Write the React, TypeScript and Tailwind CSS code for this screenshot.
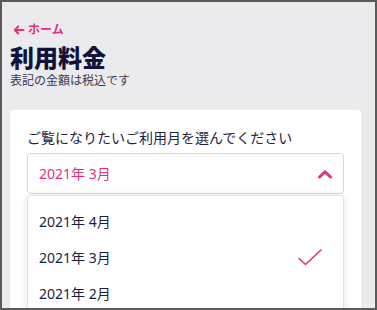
import React from 'react';

const months = ['2021年 4月', '2021年 3月', '2021年 2月'];

export default function App() {
  const selected = '2021年 3月';

  return (
    <div
      className="w-[377px] h-[310px] overflow-hidden border-2 border-[#5a5a5a] bg-[#ebebee]"
      style={{ fontFamily: '"Noto Sans", "Noto Sans CJK JP", sans-serif' }}
    >
      <div className="pl-2 pt-[20px]">
        {/* Header */}
        <a className="flex items-center gap-[3px] pl-[3px] h-4 text-[12px] font-bold leading-4 text-[#e4317f]">
          <svg width="12" height="12" viewBox="0 0 12 12" fill="none" stroke="currentColor" strokeWidth={2} strokeLinecap="round" strokeLinejoin="round">
            <path d="M10.5 6H2M5.2 2.5L1.8 6l3.4 3.5" />
          </svg>
          <span>ホーム</span>
        </a>
        <h1 className="mt-[6px] text-[24px] font-extrabold leading-7 text-[#10133a]">利用料金</h1>
        <p className="mt-px text-[12px] leading-4 text-[#3a3b4e]">表記の金額は税込です</p>

        {/* Card */}
        <div className="relative mt-[21px] w-[351px] h-[220px] rounded-[4px] bg-white px-[17px] pt-[18px]">
          <label className="block text-[14px] leading-5 text-[#22243d]">ご覧になりたいご利用月を選んでください</label>
          <div className="relative mt-[5px]">
            <button className="flex h-[41px] w-full items-center justify-between rounded-[4px] border border-[#d6d5e0] bg-white pl-[11px] pr-[10px] text-[14px] text-[#e4317f]">
              <span>{selected}</span>
              <svg width="16" height="10" viewBox="0 0 16 10" fill="none" stroke="currentColor" strokeWidth={3} strokeLinecap="round" strokeLinejoin="round">
                <path d="M2.5 8L8 2.8 13.5 8" />
              </svg>
            </button>

            {/* Dropdown menu */}
            <ul className="absolute left-0 top-[42px] w-full rounded-t-[4px] border border-[#e2e2ea] bg-white pt-[7px] pb-4 shadow-[0_2px_8px_rgba(0,0,0,0.12)]">
              {months.map((m) => (
                <li key={m} className="flex h-9 items-center justify-between pl-[11px] pr-[21px] text-[14px] text-[#1c1d38]">
                  <span>{m}</span>
                  {m === selected && (
                    <svg width="24" height="17" viewBox="0 0 24 17" fill="none" stroke="#e4317f" strokeWidth={1.6} strokeLinecap="round" strokeLinejoin="round">
                      <path d="M1 9.5L7.5 15.5 23 1" />
                    </svg>
                  )}
                </li>
              ))}
            </ul>
          </div>
        </div>
      </div>
    </div>
  );
}
